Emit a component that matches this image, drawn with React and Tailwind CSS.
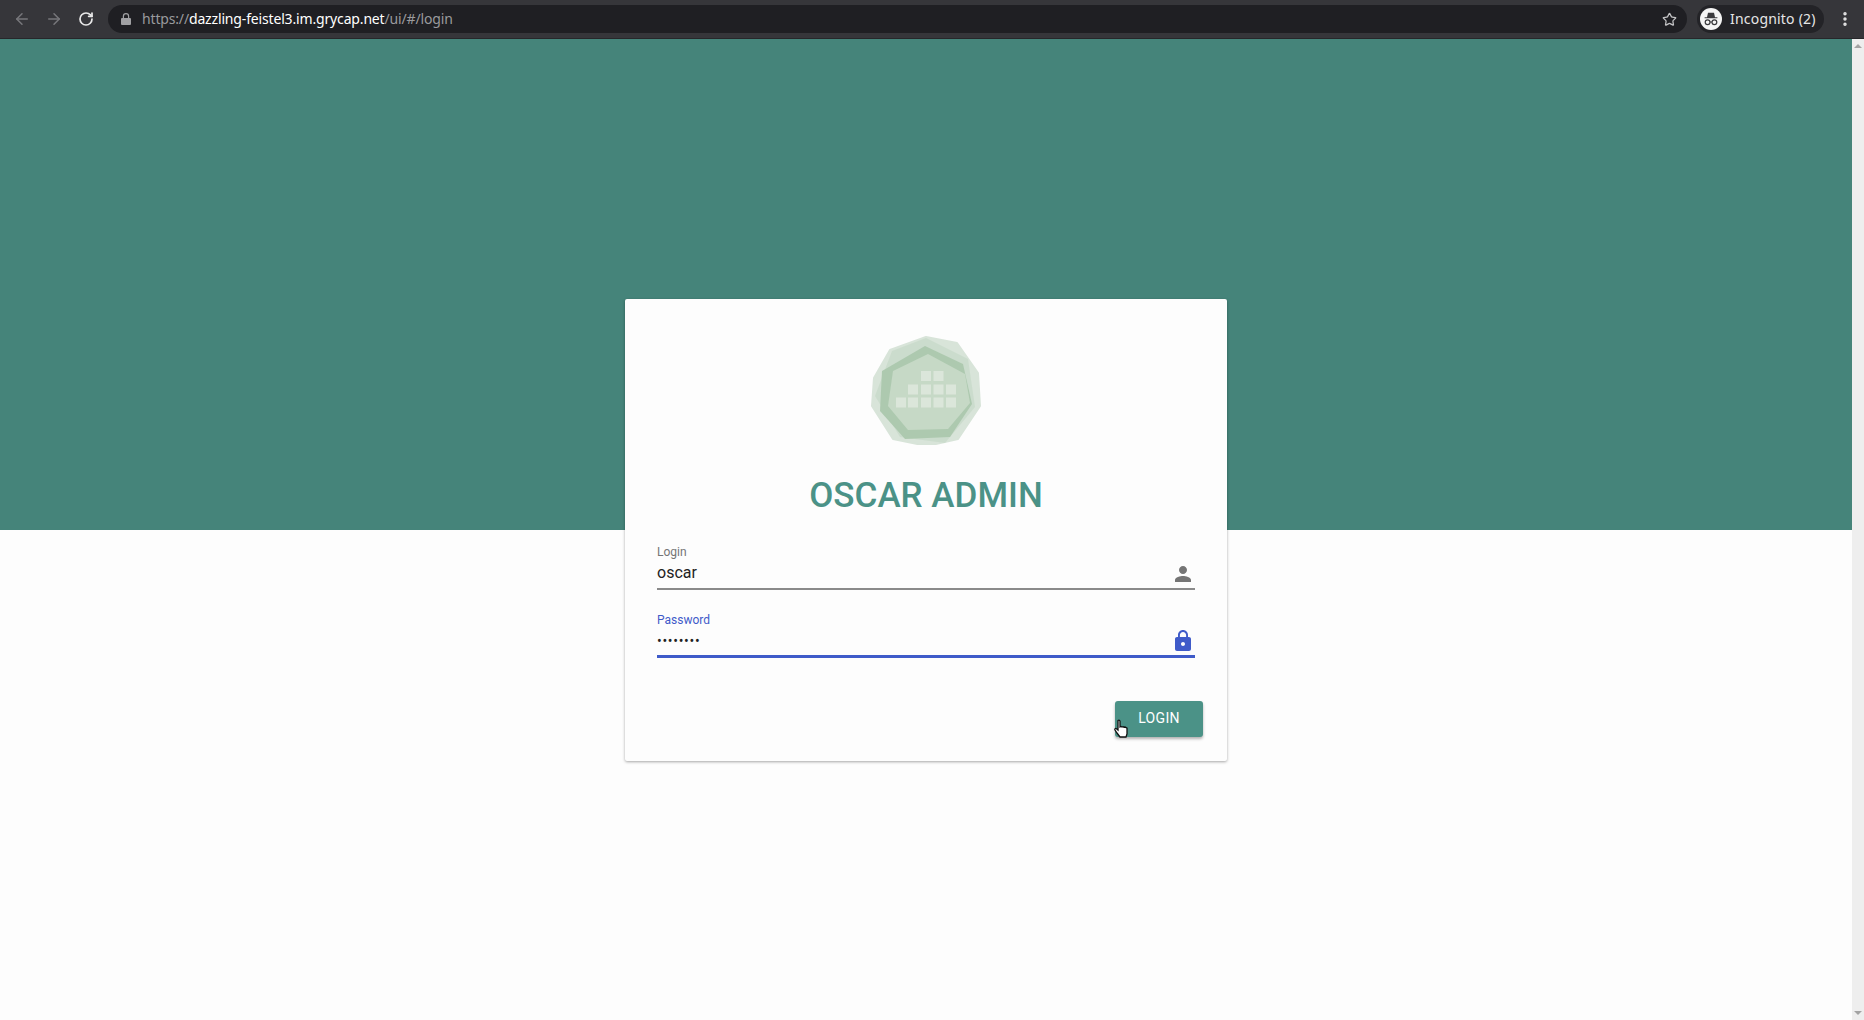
import React from "react";
import { ArrowLeft, ArrowRight, RotateCw, Star, EllipsisVertical } from "lucide-react";

// docker-style block rows inside the badge
const blocks = [
  [921, 370], [933.5, 370],
  [908, 383.5], [921, 383.5], [933.5, 383.5], [946, 383.5],
  [896, 396.5], [908, 396.5], [921, 396.5], [933.5, 396.5], [946, 396.5],
];

function Logo() {
  return (
    <svg width="110" height="110" viewBox="871 334 110 110" className="block">
      <polygon points="926,336 957,342 978,372 980,405 958,438 927,445 893,438 872,405 874,377 890,349" fill="#d8e4d9" strokeLinejoin="round" stroke="#d8e4d9" strokeWidth="2" />
      <polygon points="926,337 968,358 975,406 945,442 900,436 875,395 892,350" fill="#c3d7c4" opacity="0.6" />
      <polygon points="925,345 963,363 972,403 950,436 905,438 880,410 882,370" fill="#adc9af" />
      <polygon points="928,353 965,373 970,402 948,428 908,429 888,405 893,370" fill="#c6d9c6" />
      {blocks.map(([x, y], i) => (
        <rect key={i} x={x} y={y} width="10" height="10" fill="#dbe6da" />
      ))}
    </svg>
  );
}

function IncognitoIcon() {
  return (
    <svg width="22" height="22" viewBox="0 0 22 22" className="block">
      <circle cx="11" cy="11" r="11" fill="#f4f4f4" />
      <path d="M7 9.200 8 4.800h6l1 4.400h2.400v1.100H4.600V9.200z" fill="#3a3a3d" />
      <circle cx="7.600" cy="14.200" r="2.400" fill="none" stroke="#3a3a3d" strokeWidth="1.200" />
      <circle cx="14.400" cy="14.200" r="2.400" fill="none" stroke="#3a3a3d" strokeWidth="1.200" />
      <path d="M10 14h2" stroke="#3a3a3d" strokeWidth="1.200" />
    </svg>
  );
}

function BrowserBar() {
  return (
    <div className="flex h-[39px] items-center border-b border-[#27272a] bg-[#36363a] pr-[10px] pl-[13px] font-['Noto_Sans',sans-serif]">
      <ArrowLeft size={18} strokeWidth={2} className="text-[#77777b]" />
      <ArrowRight size={18} strokeWidth={2} className="ml-[14px] text-[#77777b]" />
      <RotateCw size={16} strokeWidth={2.600} className="ml-[15px] text-[#e8e8e8]" />
      <div className="ml-[14px] flex h-[28px] flex-1 items-center rounded-full bg-[#1f1f23] pr-[10px] pl-[13px]">
        <svg width="10" height="12" viewBox="0 0 10 12" fill="#a0a0a3">
          <path d="M1 5h.8V3.300a3.200 3.200 0 0 1 6.400 0V5H9a1 1 0 0 1 1 1v5a1 1 0 0 1-1 1H1a1 1 0 0 1-1-1V6a1 1 0 0 1 1-1zm2-.1h4V3.300a2 2 0 0 0-4 0z" />
        </svg>
        <span className="mb-[2px] ml-[11px] text-[14px] tracking-[-0.16px] text-[#9a9a9d]">
          https://<span className="text-white">dazzling-feistel3.im.grycap.net</span>/ui/#/login
        </span>
        <Star size={15} strokeWidth={2} className="ml-auto text-[#c4c4c6]" />
      </div>
      <div className="ml-[10px] flex h-[28px] w-[127px] items-center rounded-full bg-[#232327] pl-[3px]">
        <IncognitoIcon />
        <span className="mb-[2px] ml-[8px] text-[14px] tracking-[0.2px] text-[#e6e6e6]">Incognito (2)</span>
      </div>
      <EllipsisVertical size={18} strokeWidth={2.600} className="ml-[12px] text-[#e6e6e6]" />
    </div>
  );
}

function Field({ label, value, active, icon, masked }) {
  return (
    <div className={active ? "mt-[17px]" : ""}>
      <div className={`flex h-[51px] flex-col ${active ? "border-b-[3px] border-[#3f5bc9]" : "border-b-2 border-[#8a8a8a]"}`}>
        <span className={`mt-[6px] text-[12px] leading-[14px] ${active ? "text-[#3f5bc9]" : "text-[#757575]"}`}>{label}</span>
        <div className="flex flex-1 items-center justify-between">
          <span className={masked ? "text-[14px] tracking-[0.7px] text-[#222222]" : "mb-[1px] text-[16px] text-[#222222]"}>{value}</span>
          {icon}
        </div>
      </div>
    </div>
  );
}

export default function App() {
  return (
    <div className="flex h-screen w-full flex-col overflow-hidden font-['Roboto',sans-serif]">
      <BrowserBar />
      <div className="flex min-h-0 flex-1">
        <main className="flex flex-1 justify-center bg-[linear-gradient(#45847a_491px,#fdfdfd_491px)] pt-[260px]">
          <div className="relative h-[462px] w-[602px] self-start rounded-[2px] bg-[#fdfdfd] pt-[36px] shadow-[0_1px_3px_rgba(0,0,0,0.35)]">
            <div className="flex justify-center">
              <Logo />
            </div>
            <h1 className="mt-[31px] text-center text-[35px] leading-[40px] font-medium text-[#4b9287]">OSCAR ADMIN</h1>
            <div className="mt-[23px] px-[32px]">
              <Field
                label="Login"
                value="oscar"
                icon={
                  <svg width="24" height="24" viewBox="0 0 24 24" fill="#757575">
                    <path d="M12 12c2.200 0 4-1.800 4-4s-1.800-4-4-4-4 1.800-4 4 1.800 4 4 4zm0 2c-2.700 0-8 1.300-8 4v2h16v-2c0-2.700-5.300-4-8-4z" />
                  </svg>
                }
              />
              <Field
                label="Password"
                value="••••••••"
                masked
                active
                icon={
                  <svg width="24" height="24" viewBox="0 0 24 24" fill="#3f5bc9">
                    <path d="M18 8h-1V6c0-2.800-2.200-5-5-5S7 3.200 7 6v2H6c-1.100 0-2 .9-2 2v10c0 1.100.9 2 2 2h12c1.100 0 2-.9 2-2V10c0-1.100-.9-2-2-2zm-6 9c-1.100 0-2-.9-2-2s.9-2 2-2 2 .9 2 2-.9 2-2 2zm3.100-9H8.900V6c0-1.700 1.400-3.100 3.100-3.100s3.100 1.400 3.100 3.100v2z" />
                  </svg>
                }
              />
            </div>
            <div className="mt-[43px] flex justify-end pr-[24px]">
              <button className="relative h-[36px] w-[88px] rounded-[3px] bg-[#4b9287] pb-[2px] text-[14px] tracking-[0.3px] text-white shadow-[0_2px_3px_rgba(0,0,0,0.3)]">
                LOGIN
                {/* recorded mouse pointer sitting over the button */}
                <svg width="17" height="19" viewBox="0 0 17 19" className="absolute top-[18px] left-[-1px]">
                  <path
                    d="M4 1.500c1-.8 2-.2 2 1V8l1-.5 1 .5 1-.3 1 .5 1-.2 2 1.200V15l-1 3H6l-3-4-2-3c-.5-1 .5-2 1.500-1.300L4 11z"
                    fill="#ffffff"
                    stroke="#111111"
                    strokeWidth="1.300"
                  />
                </svg>
              </button>
            </div>
          </div>
        </main>
        <div className="flex w-[12px] flex-col justify-between bg-[#eeeeee] py-[5px]">
          <div className="mx-auto h-0 w-0 border-x-[4px] border-b-[4px] border-x-transparent border-b-[#a3a3a3]" />
          <div className="mx-auto h-0 w-0 border-x-[4px] border-t-[4px] border-x-transparent border-t-[#a3a3a3]" />
        </div>
      </div>
    </div>
  );
}
